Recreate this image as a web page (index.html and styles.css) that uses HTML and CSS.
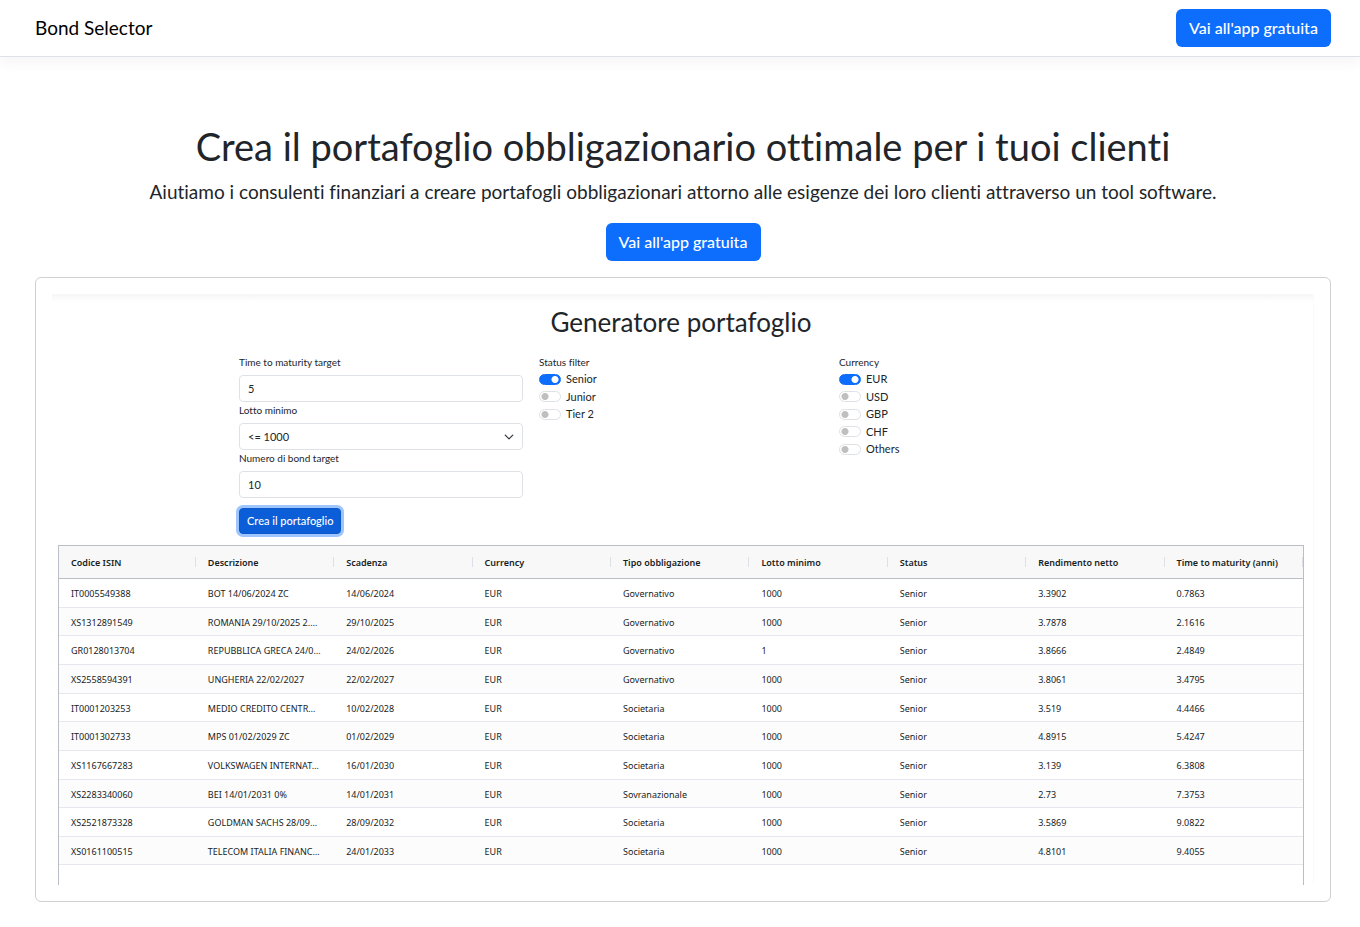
FILE: index.html
```html
<!DOCTYPE html>
<html lang="it">
<head>
<meta charset="utf-8">
<meta name="viewport" content="width=device-width, initial-scale=1">
<title>Bond Selector</title>
<link rel="stylesheet" href="styles.css">
</head>
<body>
<header class="navbar">
  <a class="brand" href="#">Bond Selector</a>
  <a class="btn" href="#">Vai all'app gratuita</a>
</header>
<main class="hero">
  <h1 class="hero-title">Crea il portafoglio obbligazionario ottimale per i tuoi clienti</h1>
  <p class="hero-text">Aiutiamo i consulenti finanziari a creare portafogli obbligazionari attorno alle esigenze dei loro clienti attraverso un tool software.</p>
  <a class="btn" href="#">Vai all'app gratuita</a>
  <section class="card">
    <div class="panel">
      <h2 class="panel-title">Generatore portafoglio</h2>
      <form class="filters">
        <div class="fields">
          <label class="label" for="ttm">Time to maturity target</label>
          <input class="control" id="ttm" type="text" value="5">
          <label class="label" for="lot">Lotto minimo</label>
          <div class="select-wrap">
            <select class="control" id="lot"><option>&lt;= 1000</option></select>
            <svg class="chevron" viewBox="0 0 16 16" aria-hidden="true"><path d="m2 5 6 6 6-6"/></svg>
          </div>
          <label class="label" for="num">Numero di bond target</label>
          <input class="control" id="num" type="text" value="10">
          <button class="submit" type="button">Crea il portafoglio</button>
        </div>
        <fieldset class="switches">
          <legend class="label">Status filter</legend>
          <label class="switch"><input type="checkbox" checked>Senior</label>
          <label class="switch"><input type="checkbox">Junior</label>
          <label class="switch"><input type="checkbox">Tier 2</label>
        </fieldset>
        <fieldset class="switches">
          <legend class="label">Currency</legend>
          <label class="switch"><input type="checkbox" checked>EUR</label>
          <label class="switch"><input type="checkbox">USD</label>
          <label class="switch"><input type="checkbox">GBP</label>
          <label class="switch"><input type="checkbox">CHF</label>
          <label class="switch"><input type="checkbox">Others</label>
        </fieldset>
      </form>
      <div class="grid-box">
        <table class="bonds">
          <thead>
            <tr><th>Codice ISIN</th><th>Descrizione</th><th>Scadenza</th><th>Currency</th><th>Tipo obbligazione</th><th>Lotto minimo</th><th>Status</th><th>Rendimento netto</th><th>Time to maturity (anni)</th></tr>
          </thead>
          <tbody>
            <tr><td>IT0005549388</td><td>BOT 14/06/2024 ZC</td><td>14/06/2024</td><td>EUR</td><td>Governativo</td><td>1000</td><td>Senior</td><td>3.3902</td><td>0.7863</td></tr>
            <tr><td>XS1312891549</td><td>ROMANIA 29/10/2025 2.…</td><td>29/10/2025</td><td>EUR</td><td>Governativo</td><td>1000</td><td>Senior</td><td>3.7878</td><td>2.1616</td></tr>
            <tr><td>GR0128013704</td><td>REPUBBLICA GRECA 24/0…</td><td>24/02/2026</td><td>EUR</td><td>Governativo</td><td>1</td><td>Senior</td><td>3.8666</td><td>2.4849</td></tr>
            <tr><td>XS2558594391</td><td>UNGHERIA 22/02/2027</td><td>22/02/2027</td><td>EUR</td><td>Governativo</td><td>1000</td><td>Senior</td><td>3.8061</td><td>3.4795</td></tr>
            <tr><td>IT0001203253</td><td>MEDIO CREDITO CENTR…</td><td>10/02/2028</td><td>EUR</td><td>Societaria</td><td>1000</td><td>Senior</td><td>3.519</td><td>4.4466</td></tr>
            <tr><td>IT0001302733</td><td>MPS 01/02/2029 ZC</td><td>01/02/2029</td><td>EUR</td><td>Societaria</td><td>1000</td><td>Senior</td><td>4.8915</td><td>5.4247</td></tr>
            <tr><td>XS1167667283</td><td>VOLKSWAGEN INTERNAT…</td><td>16/01/2030</td><td>EUR</td><td>Societaria</td><td>1000</td><td>Senior</td><td>3.139</td><td>6.3808</td></tr>
            <tr><td>XS2283340060</td><td>BEI 14/01/2031 0%</td><td>14/01/2031</td><td>EUR</td><td>Sovranazionale</td><td>1000</td><td>Senior</td><td>2.73</td><td>7.3753</td></tr>
            <tr><td>XS2521873328</td><td>GOLDMAN SACHS 28/09…</td><td>28/09/2032</td><td>EUR</td><td>Societaria</td><td>1000</td><td>Senior</td><td>3.5869</td><td>9.0822</td></tr>
            <tr><td>XS0161100515</td><td>TELECOM ITALIA FINANC…</td><td>24/01/2033</td><td>EUR</td><td>Societaria</td><td>1000</td><td>Senior</td><td>4.8101</td><td>9.4055</td></tr>
          </tbody>
        </table>
      </div>
    </div>
  </section>
</main>
</body>
</html>
```
FILE: styles.css
```css
* { box-sizing: border-box; }
body {
  margin: 0;
  background: #fff;
  color: #212529;
  font-family: Lato, "Liberation Sans", sans-serif;
  font-size: 16px;
  font-variant-ligatures: none;
  line-height: 24px;
}
.navbar {
  display: flex;
  align-items: center;
  justify-content: space-between;
  padding: 9px 29px 9px 35px;
  border-bottom: 1px solid #dee2e6;
  box-shadow: 0 6px 12px rgba(0, 0, 0, 0.04);
}
.brand { color: #000; font-size: 19px; line-height: 30px; text-decoration: none; }
.btn {
  display: inline-block;
  min-width: 155px;
  padding: 7px 12px;
  border-radius: 6px;
  background: #0d6efd;
  color: #fff;
  font-weight: 500;
  text-align: center;
  text-decoration: none;
}
.hero { padding: 65px 29px 24px 35px; text-align: center; }
.hero-title { margin: 0 0 8px; font-size: 38px; font-weight: 400; line-height: 48px; }
.hero-text { margin: 0 0 17px; font-size: 19px; line-height: 28px; }
.card {
  margin-top: 16px;
  padding: 16px;
  border: 1px solid #d0d0d2;
  border-radius: 6px;
  text-align: left;
}
.panel {
  padding: 12px 9px 0 6px;
  border-right: 1px solid #fafafa;
  background: linear-gradient(#f6f6f6, #fff 8px);
}
.panel-title { margin: 0 0 16px; font-size: 26px; font-weight: 400; line-height: 32px; text-align: center; }
.filters {
  display: grid;
  grid-template-columns: repeat(3, 1fr);
  gap: 16px;
  max-width: 884px;
  margin: 0 auto;
  font-size: 11px;
}
.fields { display: flex; flex-direction: column; }
.label { display: block; padding: 0; font-size: 10px; line-height: 16px; }
.control {
  appearance: none;
  width: 100%;
  height: 27px;
  padding: 0 8px;
  border: 1px solid #dee2e6;
  border-radius: 4px;
  background: #fff;
  color: #212529;
  font: inherit;
}
.fields .label + * { margin: 5px 0 0; }
.select-wrap { position: relative; }
.chevron {
  position: absolute;
  top: 9px;
  right: 9px;
  width: 10px;
  height: 10px;
  fill: none;
  stroke: #343a40;
  stroke-width: 2;
  stroke-linecap: round;
  stroke-linejoin: round;
}
.submit {
  align-self: flex-start;
  min-width: 102px;
  height: 26px;
  margin-top: 10px;
  padding: 0 7px;
  border: 1px solid #0a58ca;
  border-radius: 4px;
  background: #0b5ed7;
  box-shadow: 0 0 0 3px #9ec5fe;
  color: #fff;
  font: inherit;
  font-weight: 500;
}
.switches { min-width: 0; margin: 0; padding: 0; border: 0; }
.switch { display: flex; align-items: center; gap: 5px; height: 18px; }
.switch:nth-child(odd) { height: 17px; }
.switch input {
  appearance: none;
  width: 22px;
  height: 11px;
  margin: 0;
  border: 1px solid #dee2e6;
  border-radius: 6px;
  background: radial-gradient(circle at 5px 50%, #bfbfbf 3px, #fff 4px);
}
.switch input:checked {
  border-color: #0d6efd;
  background: radial-gradient(circle at 15px 50%, #fff 3px, #0d6efd 4px);
}
.grid-box {
  height: 340px;
  margin-top: 11px;
  border: solid #babfc7;
  border-width: 1px 1px 0;
}
.bonds {
  width: 100%;
  border-collapse: separate;
  border-spacing: 0;
  table-layout: fixed;
  color: #181d1f;
  font-family: "Noto Sans", "Open Sans", sans-serif;
  font-size: 9px;
  line-height: 16px;
}
.bonds th, .bonds td {
  padding: 2px 12px 0;
  overflow: hidden;
  text-align: left;
  text-overflow: ellipsis;
  white-space: nowrap;
}
.bonds th {
  height: 33px;
  border-bottom: 1px solid #babfc7;
  background: linear-gradient(#dde0e4, #dde0e4) right center / 1px 10px no-repeat #f8f8f8;
  font-weight: 600;
}
.bonds th:first-child { width: 11%; }
.bonds th:last-child { padding-right: 0; }
.bonds td { height: 29px; border-bottom: 1px solid #e6e8ed; }
.bonds tr:nth-child(3n + 2) td, .bonds tr:last-child td { height: 28px; }
.bonds tbody tr:nth-child(even) { background: #fcfcfc; }
```
